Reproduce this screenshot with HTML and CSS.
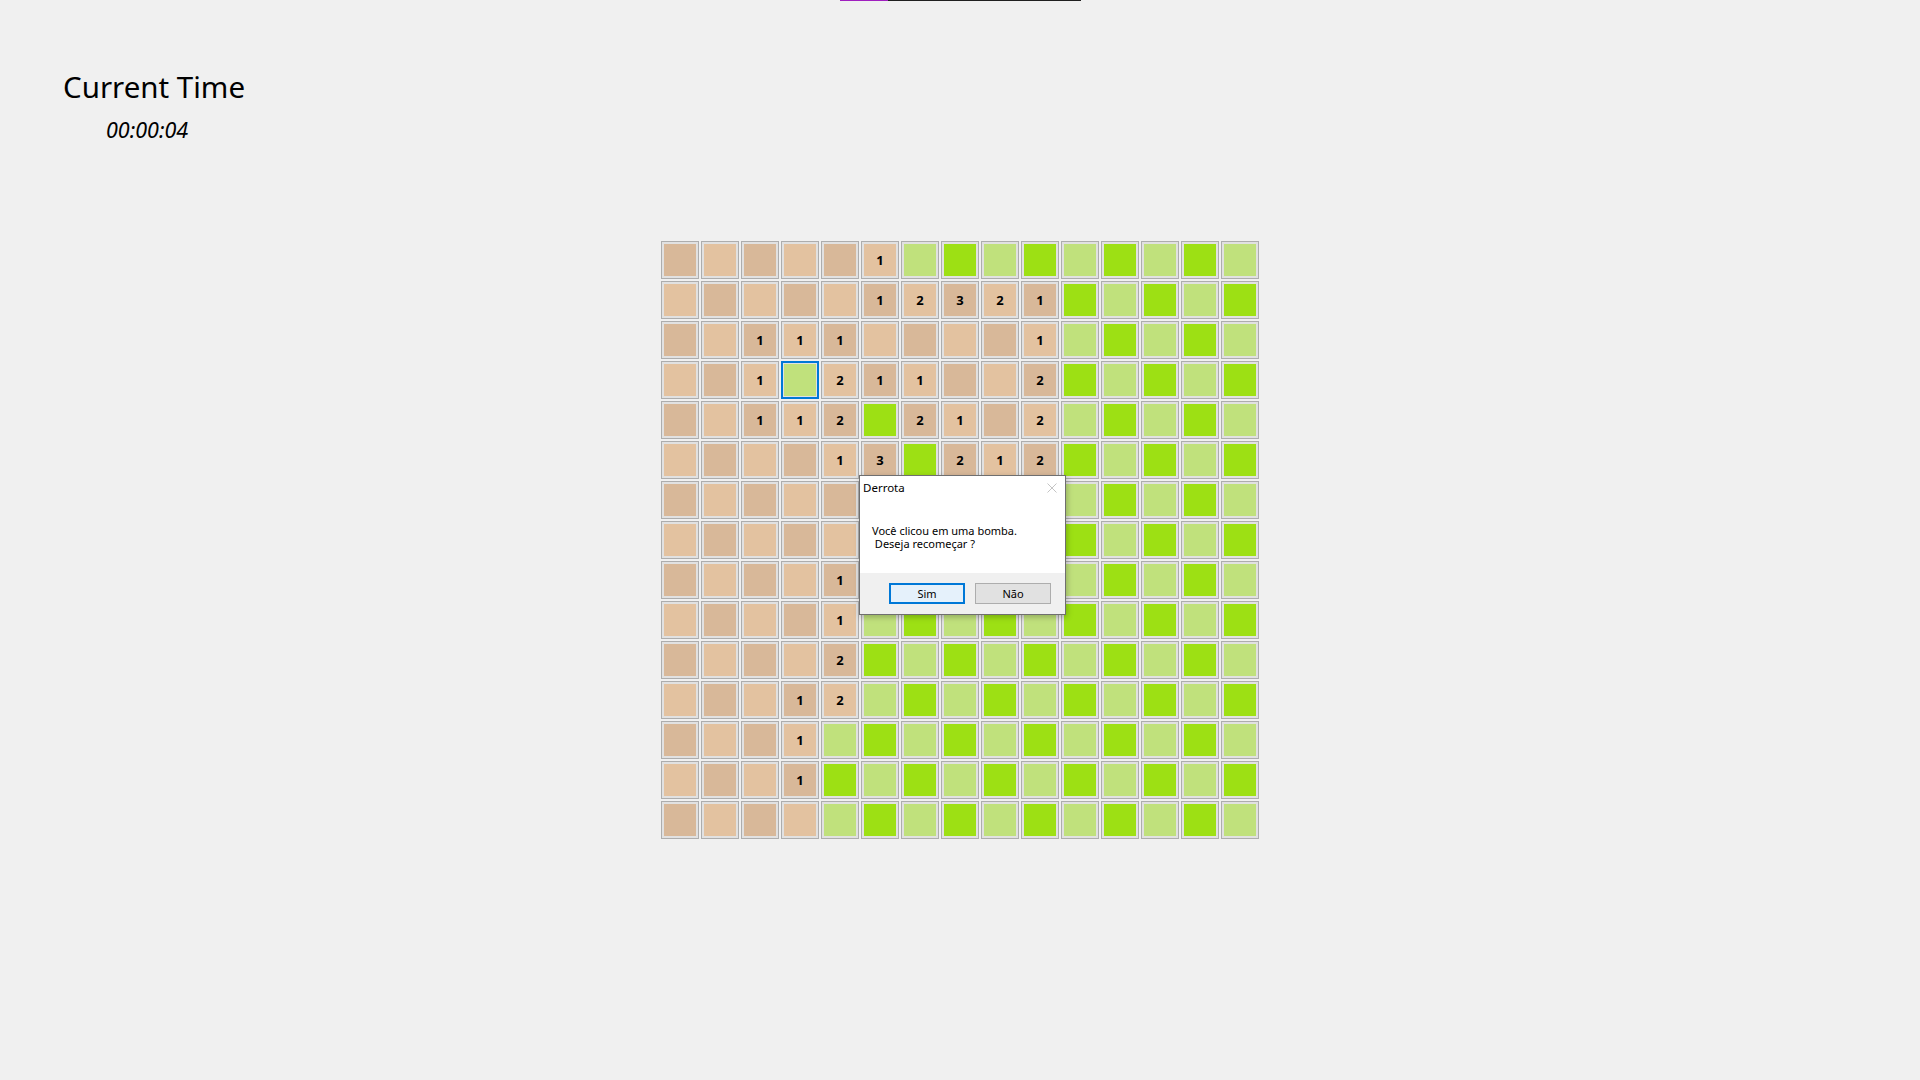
FILE: index.html
```html
<!DOCTYPE html>
<html lang="pt">
<head>
<meta charset="utf-8">
<title>Minesweeper</title>
<link rel="stylesheet" href="styles.css">
</head>
<body>
<div class="topbar"><span class="bar-accent"></span><span class="bar-dark"></span></div>

<div class="clock">
  <div class="clock-title">Current Time</div>
  <div class="clock-value">00:00:04</div>
</div>

<div class="board">
  <!-- r0 -->
  <div class="cell td"><div class="f"></div></div><div class="cell tl"><div class="f"></div></div><div class="cell td"><div class="f"></div></div><div class="cell tl"><div class="f"></div></div><div class="cell td"><div class="f"></div></div><div class="cell tl"><div class="f">1</div></div><div class="cell gl"><div class="f"></div></div><div class="cell gb"><div class="f"></div></div><div class="cell gl"><div class="f"></div></div><div class="cell gb"><div class="f"></div></div><div class="cell gl"><div class="f"></div></div><div class="cell gb"><div class="f"></div></div><div class="cell gl"><div class="f"></div></div><div class="cell gb"><div class="f"></div></div><div class="cell gl"><div class="f"></div></div>
  <!-- r1 -->
  <div class="cell tl"><div class="f"></div></div><div class="cell td"><div class="f"></div></div><div class="cell tl"><div class="f"></div></div><div class="cell td"><div class="f"></div></div><div class="cell tl"><div class="f"></div></div><div class="cell td"><div class="f">1</div></div><div class="cell tl"><div class="f">2</div></div><div class="cell td"><div class="f">3</div></div><div class="cell tl"><div class="f">2</div></div><div class="cell td"><div class="f">1</div></div><div class="cell gb"><div class="f"></div></div><div class="cell gl"><div class="f"></div></div><div class="cell gb"><div class="f"></div></div><div class="cell gl"><div class="f"></div></div><div class="cell gb"><div class="f"></div></div>
  <!-- r2 -->
  <div class="cell td"><div class="f"></div></div><div class="cell tl"><div class="f"></div></div><div class="cell td"><div class="f">1</div></div><div class="cell tl"><div class="f">1</div></div><div class="cell td"><div class="f">1</div></div><div class="cell tl"><div class="f"></div></div><div class="cell td"><div class="f"></div></div><div class="cell tl"><div class="f"></div></div><div class="cell td"><div class="f"></div></div><div class="cell tl"><div class="f">1</div></div><div class="cell gl"><div class="f"></div></div><div class="cell gb"><div class="f"></div></div><div class="cell gl"><div class="f"></div></div><div class="cell gb"><div class="f"></div></div><div class="cell gl"><div class="f"></div></div>
  <!-- r3 -->
  <div class="cell tl"><div class="f"></div></div><div class="cell td"><div class="f"></div></div><div class="cell tl"><div class="f">1</div></div><div class="cell gl sel"><div class="f"></div></div><div class="cell tl"><div class="f">2</div></div><div class="cell td"><div class="f">1</div></div><div class="cell tl"><div class="f">1</div></div><div class="cell td"><div class="f"></div></div><div class="cell tl"><div class="f"></div></div><div class="cell td"><div class="f">2</div></div><div class="cell gb"><div class="f"></div></div><div class="cell gl"><div class="f"></div></div><div class="cell gb"><div class="f"></div></div><div class="cell gl"><div class="f"></div></div><div class="cell gb"><div class="f"></div></div>
  <!-- r4 -->
  <div class="cell td"><div class="f"></div></div><div class="cell tl"><div class="f"></div></div><div class="cell td"><div class="f">1</div></div><div class="cell tl"><div class="f">1</div></div><div class="cell td"><div class="f">2</div></div><div class="cell gb"><div class="f"></div></div><div class="cell td"><div class="f">2</div></div><div class="cell tl"><div class="f">1</div></div><div class="cell td"><div class="f"></div></div><div class="cell tl"><div class="f">2</div></div><div class="cell gl"><div class="f"></div></div><div class="cell gb"><div class="f"></div></div><div class="cell gl"><div class="f"></div></div><div class="cell gb"><div class="f"></div></div><div class="cell gl"><div class="f"></div></div>
  <!-- r5 -->
  <div class="cell tl"><div class="f"></div></div><div class="cell td"><div class="f"></div></div><div class="cell tl"><div class="f"></div></div><div class="cell td"><div class="f"></div></div><div class="cell tl"><div class="f">1</div></div><div class="cell td"><div class="f">3</div></div><div class="cell gb"><div class="f"></div></div><div class="cell td"><div class="f">2</div></div><div class="cell tl"><div class="f">1</div></div><div class="cell td"><div class="f">2</div></div><div class="cell gb"><div class="f"></div></div><div class="cell gl"><div class="f"></div></div><div class="cell gb"><div class="f"></div></div><div class="cell gl"><div class="f"></div></div><div class="cell gb"><div class="f"></div></div>
  <!-- r6 -->
  <div class="cell td"><div class="f"></div></div><div class="cell tl"><div class="f"></div></div><div class="cell td"><div class="f"></div></div><div class="cell tl"><div class="f"></div></div><div class="cell td"><div class="f"></div></div><div class="cell tl"><div class="f"></div></div><div class="cell gl"><div class="f"></div></div><div class="cell gb"><div class="f"></div></div><div class="cell gl"><div class="f"></div></div><div class="cell gb"><div class="f"></div></div><div class="cell gl"><div class="f"></div></div><div class="cell gb"><div class="f"></div></div><div class="cell gl"><div class="f"></div></div><div class="cell gb"><div class="f"></div></div><div class="cell gl"><div class="f"></div></div>
  <!-- r7 -->
  <div class="cell tl"><div class="f"></div></div><div class="cell td"><div class="f"></div></div><div class="cell tl"><div class="f"></div></div><div class="cell td"><div class="f"></div></div><div class="cell tl"><div class="f"></div></div><div class="cell td"><div class="f"></div></div><div class="cell gb"><div class="f"></div></div><div class="cell gl"><div class="f"></div></div><div class="cell gb"><div class="f"></div></div><div class="cell gl"><div class="f"></div></div><div class="cell gb"><div class="f"></div></div><div class="cell gl"><div class="f"></div></div><div class="cell gb"><div class="f"></div></div><div class="cell gl"><div class="f"></div></div><div class="cell gb"><div class="f"></div></div>
  <!-- r8 -->
  <div class="cell td"><div class="f"></div></div><div class="cell tl"><div class="f"></div></div><div class="cell td"><div class="f"></div></div><div class="cell tl"><div class="f"></div></div><div class="cell td"><div class="f">1</div></div><div class="cell tl"><div class="f"></div></div><div class="cell gl"><div class="f"></div></div><div class="cell gb"><div class="f"></div></div><div class="cell gl"><div class="f"></div></div><div class="cell gb"><div class="f"></div></div><div class="cell gl"><div class="f"></div></div><div class="cell gb"><div class="f"></div></div><div class="cell gl"><div class="f"></div></div><div class="cell gb"><div class="f"></div></div><div class="cell gl"><div class="f"></div></div>
  <!-- r9 -->
  <div class="cell tl"><div class="f"></div></div><div class="cell td"><div class="f"></div></div><div class="cell tl"><div class="f"></div></div><div class="cell td"><div class="f"></div></div><div class="cell tl"><div class="f">1</div></div><div class="cell gl"><div class="f"></div></div><div class="cell gb"><div class="f"></div></div><div class="cell gl"><div class="f"></div></div><div class="cell gb"><div class="f"></div></div><div class="cell gl"><div class="f"></div></div><div class="cell gb"><div class="f"></div></div><div class="cell gl"><div class="f"></div></div><div class="cell gb"><div class="f"></div></div><div class="cell gl"><div class="f"></div></div><div class="cell gb"><div class="f"></div></div>
  <!-- r10 -->
  <div class="cell td"><div class="f"></div></div><div class="cell tl"><div class="f"></div></div><div class="cell td"><div class="f"></div></div><div class="cell tl"><div class="f"></div></div><div class="cell td"><div class="f">2</div></div><div class="cell gb"><div class="f"></div></div><div class="cell gl"><div class="f"></div></div><div class="cell gb"><div class="f"></div></div><div class="cell gl"><div class="f"></div></div><div class="cell gb"><div class="f"></div></div><div class="cell gl"><div class="f"></div></div><div class="cell gb"><div class="f"></div></div><div class="cell gl"><div class="f"></div></div><div class="cell gb"><div class="f"></div></div><div class="cell gl"><div class="f"></div></div>
  <!-- r11 -->
  <div class="cell tl"><div class="f"></div></div><div class="cell td"><div class="f"></div></div><div class="cell tl"><div class="f"></div></div><div class="cell td"><div class="f">1</div></div><div class="cell tl"><div class="f">2</div></div><div class="cell gl"><div class="f"></div></div><div class="cell gb"><div class="f"></div></div><div class="cell gl"><div class="f"></div></div><div class="cell gb"><div class="f"></div></div><div class="cell gl"><div class="f"></div></div><div class="cell gb"><div class="f"></div></div><div class="cell gl"><div class="f"></div></div><div class="cell gb"><div class="f"></div></div><div class="cell gl"><div class="f"></div></div><div class="cell gb"><div class="f"></div></div>
  <!-- r12 -->
  <div class="cell td"><div class="f"></div></div><div class="cell tl"><div class="f"></div></div><div class="cell td"><div class="f"></div></div><div class="cell tl"><div class="f">1</div></div><div class="cell gl"><div class="f"></div></div><div class="cell gb"><div class="f"></div></div><div class="cell gl"><div class="f"></div></div><div class="cell gb"><div class="f"></div></div><div class="cell gl"><div class="f"></div></div><div class="cell gb"><div class="f"></div></div><div class="cell gl"><div class="f"></div></div><div class="cell gb"><div class="f"></div></div><div class="cell gl"><div class="f"></div></div><div class="cell gb"><div class="f"></div></div><div class="cell gl"><div class="f"></div></div>
  <!-- r13 -->
  <div class="cell tl"><div class="f"></div></div><div class="cell td"><div class="f"></div></div><div class="cell tl"><div class="f"></div></div><div class="cell td"><div class="f">1</div></div><div class="cell gb"><div class="f"></div></div><div class="cell gl"><div class="f"></div></div><div class="cell gb"><div class="f"></div></div><div class="cell gl"><div class="f"></div></div><div class="cell gb"><div class="f"></div></div><div class="cell gl"><div class="f"></div></div><div class="cell gb"><div class="f"></div></div><div class="cell gl"><div class="f"></div></div><div class="cell gb"><div class="f"></div></div><div class="cell gl"><div class="f"></div></div><div class="cell gb"><div class="f"></div></div>
  <!-- r14 -->
  <div class="cell td"><div class="f"></div></div><div class="cell tl"><div class="f"></div></div><div class="cell td"><div class="f"></div></div><div class="cell tl"><div class="f"></div></div><div class="cell gl"><div class="f"></div></div><div class="cell gb"><div class="f"></div></div><div class="cell gl"><div class="f"></div></div><div class="cell gb"><div class="f"></div></div><div class="cell gl"><div class="f"></div></div><div class="cell gb"><div class="f"></div></div><div class="cell gl"><div class="f"></div></div><div class="cell gb"><div class="f"></div></div><div class="cell gl"><div class="f"></div></div><div class="cell gb"><div class="f"></div></div><div class="cell gl"><div class="f"></div></div>
</div>

<div class="dialog">
  <div class="dialog-title">
    <span>Derrota</span>
    <svg class="dialog-close" width="10" height="10" viewBox="0 0 10 10"><path d="M0.5 0.5 L9.5 9.5 M9.5 0.5 L0.5 9.5" stroke="#c4c4c4" stroke-width="1" fill="none"/></svg>
  </div>
  <div class="dialog-body"><div class="msg">Você clicou em uma bomba.</div><div class="msg"> Deseja recomeçar ?</div></div>
  <div class="dialog-footer">
    <div class="btn btn-default">Sim</div>
    <div class="btn">Não</div>
  </div>
</div>
</body>
</html>
```
FILE: styles.css
```css
html, body {
  margin: 0;
  padding: 0;
}
body {
  background: #f0f0f0;
  font-family: "Noto Sans", "Open Sans", "DejaVu Sans", sans-serif;
  color: #000;
  width: 1920px;
  height: 1080px;
  overflow: hidden;
}

.topbar {
  display: flex;
  height: 1px;
  margin-left: 840px;
}
.bar-accent {
  width: 48px;
  background: #a01fbf;
}
.bar-dark {
  width: 193px;
  background: #1f1f1f;
}

.clock {
  margin-top: 66px;
}
.clock-title {
  font-size: 29.5px;
  line-height: 40px;
  padding-left: 63px;
}
.clock-value {
  margin-top: 9px;
  font-size: 21.5px;
  line-height: 28px;
  font-style: italic;
  padding-left: 106px;
}

.board {
  margin-top: 97px;
  margin-left: 661px;
  display: grid;
  grid-template-columns: repeat(15, 38px);
  grid-auto-rows: 38px;
  gap: 2px;
  width: 598px;
}
.cell {
  box-sizing: border-box;
  width: 38px;
  height: 38px;
  border: 1px solid #adadad;
  background: #e1e1e1;
  padding: 2px;
}
.cell .f {
  width: 32px;
  height: 32px;
  display: flex;
  align-items: center;
  justify-content: center;
  font-weight: 700;
  font-size: 13px;
  line-height: 1;
}
.td .f { background: #d8b899; }
.tl .f { background: #e3c2a0; }
.gl .f { background: #c0e17c; }
.gb .f { background: #9de014; }
.cell.sel {
  border: 2px solid #0078d7;
  padding: 1px;
}

.dialog {
  position: absolute;
  left: 859px;
  top: 475px;
  width: 207px;
  box-sizing: border-box;
  border: 1px solid #6f6f6f;
  background: #fff;
  box-shadow: 1px 2px 6px rgba(0, 0, 0, 0.25);
  font-size: 11px;
}
.dialog-title {
  height: 30px;
  box-sizing: border-box;
  padding: 4px 8px 0 3px;
  line-height: 16px;
  display: flex;
  justify-content: space-between;
  align-items: flex-start;
  font-size: 11.5px;
}
.dialog-close {
  margin-top: 3px;
}
.dialog-body {
  padding: 18px 0 23px 12px;
}
.msg {
  line-height: 13px;
  white-space: pre;
}
.dialog-footer {
  background: #f0f0f0;
  height: 41px;
  box-sizing: border-box;
  padding: 10px 14px 0 0;
  display: flex;
  justify-content: flex-end;
  align-items: flex-start;
  gap: 10px;
}
.btn {
  box-sizing: border-box;
  width: 76px;
  height: 21px;
  border: 1px solid #adadad;
  background: #e1e1e1;
  display: flex;
  align-items: center;
  justify-content: center;
  line-height: 1;
}
.btn-default {
  border: 2px solid #0078d7;
  background: #e5f1fb;
}
```
